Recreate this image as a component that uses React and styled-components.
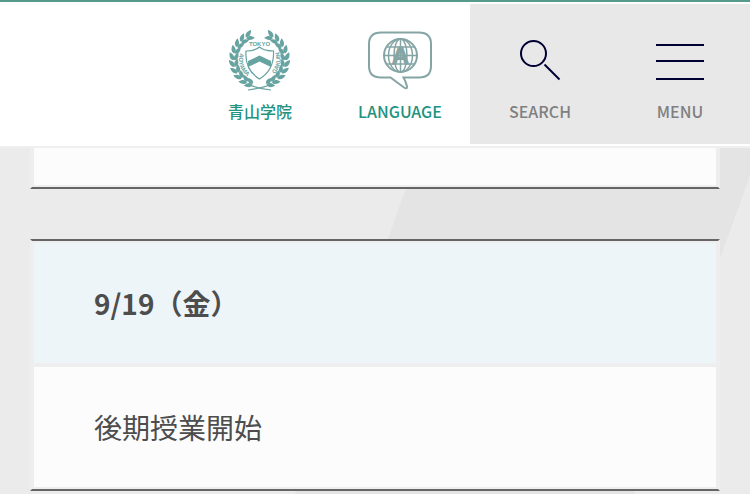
import React from "react";
import styled, {createGlobalStyle} from "styled-components";

const GlobalStyle = createGlobalStyle`
  * {
    box-sizing: border-box;
  }
  body {
    margin: 0;
    color: #4d4d4d;
    font-family: "Noto Sans CJK JP", "Noto Sans", sans-serif;
  }
`;

const LEAF = "M0 0C-3.500 -2 -3 -6 0 -10C3 -6 3 -2 0 0Z";
const LEAF_ANGLES = [26, 41, 56, 71, 86, 101, 116, 131, 146, 159];

function HalfWreath() {
    return (
        <g>
            {LEAF_ANGLES.map((angle) => (
                <g key={angle} transform={`rotate(${angle} 31.500 31.500)`}>
                    <path d={LEAF} transform="translate(34 5.500) rotate(-62) scale(.88)"/>
                    <path d={LEAF} transform="translate(34 6.500) rotate(-114) scale(.85)"/>
                </g>
            ))}
            <path d="M20 62Q35 60 44 56" fill="none" stroke="#67a3a0" strokeWidth="1.2"/>
        </g>
    );
}

function CrestIcon() {
    return (
        <Icon viewBox="0 0 64 64" aria-hidden="true">
            <g fill="#67a3a0">
                <HalfWreath/>
                <g transform="translate(63 0) scale(-1 1)">
                    <HalfWreath/>
                </g>
            </g>
            <path
                d="M18 23Q27 23 31.500 19Q36 23 45.500 23Q46.500 42 31.500 51Q16.500 42 18 23Z"
                fill="#fff" stroke="#67a3a0" strokeWidth="1.2"
            />
            <path d="M20 33L31.500 27.500L43 33V39L31.500 33.500L20 39Z" fill="#67a3a0"/>
            <path id="crest-left" d="M12 25A20.500 20.500 0 0 0 26 51.500" fill="none"/>
            <path id="crest-right" d="M37.500 51.500A20.500 20.500 0 0 0 51 24" fill="none"/>
            <CrestText x="31.500" y="17.500" textAnchor="middle">TOKYO</CrestText>
            <CrestText><textPath href="#crest-left">AOYAMA</textPath></CrestText>
            <CrestText textAnchor="end"><textPath href="#crest-right" startOffset="100%">GAKUIN</textPath></CrestText>
        </Icon>
    );
}

function LanguageIcon() {
    return (
        <Icon viewBox="0 0 64 64" aria-hidden="true" fill="none" stroke="#85a5a4">
            <path
                d="M13 4.500H51Q63 4.500 63 16V38Q63 49.500 51 49.500H35.500Q38 54 39 58.500Q39.500 61.500 36 59.500L22.500 49.500H13Q1 49.500 1 38V16Q1 4.500 13 4.500Z"
                strokeWidth="2"
            />
            <circle cx="32.500" cy="27.500" r="16.500" strokeWidth="2"/>
            <g strokeWidth="1.500">
                <ellipse cx="32.500" cy="27.500" rx="12" ry="16.500"/>
                <ellipse cx="32.500" cy="27.500" rx="6.500" ry="16.500"/>
                <path d="M32.500 11V44M16 27.500H49M19 19H46M19 36H46"/>
            </g>
            <GlobeLetter x="32.500" y="36" textAnchor="middle">A</GlobeLetter>
        </Icon>
    );
}

function SearchIcon() {
    return (
        <Icon viewBox="0 0 64 64" aria-hidden="true" fill="none" stroke="#000035" strokeWidth="2">
            <circle cx="25.500" cy="25.500" r="12.500"/>
            <path d="M36.500 36.500L51.500 51.500"/>
        </Icon>
    );
}

function MenuIcon() {
    return (
        <Icon viewBox="0 0 64 64" aria-hidden="true" fill="none" stroke="#000035" strokeWidth="2">
            <path d="M8 17H56M8 33H56M8 51H56"/>
        </Icon>
    );
}

export default function App() {
    return (
        <Page>
            <GlobalStyle/>
            <Header>
                <NavLink href="#aoyama">
                    <CrestIcon/>
                    青山学院
                </NavLink>
                <NavButton type="button">
                    <LanguageIcon/>
                    LANGUAGE
                </NavButton>
                <NavButton type="button" $muted>
                    <SearchIcon/>
                    SEARCH
                </NavButton>
                <NavButton type="button" $muted>
                    <MenuIcon/>
                    MENU
                </NavButton>
            </Header>
            <Main>
                <Schedule $continued>
                    <tbody>
                        <tr>
                            <EventCell/>
                        </tr>
                    </tbody>
                </Schedule>
                <Schedule>
                    <tbody>
                        <tr>
                            <DateCell scope="row">9/19（金）</DateCell>
                        </tr>
                        <tr>
                            <EventCell>後期授業開始</EventCell>
                        </tr>
                    </tbody>
                </Schedule>
            </Main>
        </Page>
    );
}

const Page = styled.div`
  min-height: 100vh;
  background: linear-gradient(110deg, #ebebeb 446px, #e4e4e4 446px 765px, #ebebeb 765px);
`;
const Header = styled.header`
  display: flex;
  justify-content: flex-end;
  padding: 2px 0;
  background-color: #ffffff;
  border-top: 2px solid #569a8c;
  border-bottom: 2px solid #efefef;
`;
const NavButton = styled.button`
  width: 140px;
  height: 140px;
  gap: 8px;
  display: flex;
  flex-direction: column;
  justify-content: flex-start;
  align-items: center;
  padding: 24px 0 0;
  border: 0;
  background-color: ${(props) => (props.$muted ? "#e8e8e8" : "#ffffff")};
  color: ${(props) => (props.$muted ? "#808080" : "#22937f")};
  font-family: inherit;
  font-size: 16px;
  font-weight: 500;
  line-height: 22px;
  text-decoration: none;
  cursor: pointer;
`;
const NavLink = styled(NavButton).attrs({as: "a"})``;
const Icon = styled.svg`
  width: 64px;
  height: 64px;
  flex-shrink: 0;
`;
const CrestText = styled.text`
  fill: #67a3a0;
  font-family: "Liberation Sans", sans-serif;
  font-size: 6px;
  font-weight: 700;
`;
const GlobeLetter = styled.text`
  fill: #85a5a4;
  stroke: #85a5a4;
  font-family: "Liberation Sans", sans-serif;
  font-size: 24px;
  font-weight: 700;
`;
const Main = styled.main`
  gap: 50px;
  display: flex;
  flex-direction: column;
  padding: 0 30px;
`;
const Cell = styled.td`
  height: 124px;
  padding: 0 60px;
  border: 2px solid #eeeeee;
  background-color: #fcfcfc;
  font-size: 28px;
  font-weight: 400;
  line-height: 42px;
  text-align: left;
`;
const EventCell = styled(Cell)``;
const DateCell = styled(Cell).attrs({as: "th"})`
  background-color: #edf5f9;
  font-weight: 700;
`;
const Schedule = styled.table`
  width: 100%;
  border: 2px solid;
  border-color: #666464 #eeeeee;
  border-spacing: 0;

  ${(props) => props.$continued && `
    border-top: 0;

    ${Cell} {
      height: 39px;
      border-top: 0;
    }
  `}
`;
